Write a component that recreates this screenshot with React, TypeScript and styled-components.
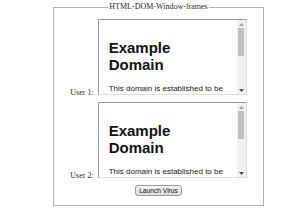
import styled, { createGlobalStyle } from 'styled-components';

const GlobalStyle = createGlobalStyle`
  html, body {
    margin: 0;
    background: #ffffff;
  }
  * {
    box-sizing: border-box;
  }
`;

const users = ['User 1:', 'User 2:'];

const App = () => {
  return (
    <>
      <GlobalStyle />
      <Page>
        <FrameSet>
          <Legend>HTML-DOM-Window-frames</Legend>
          {users.map((user, i) => (
            <Row key={user} first={i === 0}>
              <Label>{user}</Label> <FakeFrame />
            </Row>
          ))}
          <ButtonRow>
            <LaunchButton type='button'>Launch Virus</LaunchButton>
          </ButtonRow>
        </FrameSet>
      </Page>
    </>
  );
};

export default App;

// a stand-in for the example.com iframe, scaled to half size
const FakeFrame = () => (
  <Frame>
    <FrameInner>
      <FrameBody>
        <Heading>
          Example
          <br />
          Domain
        </Heading>
        <Para>This domain is established to be used for illustrative examples in documents.</Para>
      </FrameBody>
      <ScrollTrack>
        <Arrow>
          <svg width='5' height='3' viewBox='0 0 5 3'>
            <path d='M0 3 L2.5 0 L5 3 Z' fill='#a3a3a3' />
          </svg>
        </Arrow>
        <Thumb />
        <Spacer />
        <Arrow>
          <svg width='5' height='3' viewBox='0 0 5 3'>
            <path d='M0 0 L5 0 L2.5 3 Z' fill='#505050' />
          </svg>
        </Arrow>
      </ScrollTrack>
    </FrameInner>
  </Frame>
);

const Page = styled.div`
  padding: 2px 0 0 53px;
`;

const FrameSet = styled.fieldset`
  width: 211px;
  margin: 0;
  padding: 7px 6px 9px;
  border: 1px solid #b4b4b4;
  text-align: center;
  font-family: 'Liberation Serif', serif;
  font-size: 8px;
  color: #2a2a2a;
`;

const Legend = styled.legend`
  margin: 0 auto;
  padding: 0 1px;
  font-size: 8px;
  line-height: 10px;
`;

const Row = styled.div<{ first: boolean }>`
  margin-top: ${({ first }) => (first ? '0' : '5px')};
  line-height: 9px;
  white-space: nowrap;
`;

const Label = styled.span`
  font-size: 8px;
`;

// inline-block with overflow hidden: baseline sits on the bottom edge, like an iframe
const Frame = styled.span`
  display: inline-block;
  width: 149px;
  height: 76px;
  margin-left: 2px;
  overflow: hidden;
  vertical-align: baseline;
  border-top: 1px solid #9a9a9a;
  border-left: 1px solid #9a9a9a;
  border-right: 1px solid #dedede;
  border-bottom: 1px solid #dedede;
  background: #ffffff;
  text-align: left;
`;

const FrameInner = styled.span`
  display: flex;
  height: 100%;
`;

const FrameBody = styled.span`
  display: block;
  flex: 1;
  overflow: hidden;
  padding: 19px 8px 0 10px;
  font-family: 'Liberation Sans', Arial, sans-serif;
  color: #1a1a1a;
  white-space: normal;
`;

const Heading = styled.span`
  display: block;
  font-size: 15px;
  line-height: 17px;
  font-weight: bold;
  color: #111;
`;

const Para = styled.span`
  display: block;
  margin-top: 11px;
  font-size: 8px;
  line-height: 10px;
  width: 116px;
`;

const ScrollTrack = styled.span`
  display: flex;
  flex-direction: column;
  align-items: center;
  width: 9px;
  flex: none;
  background: #f1f1f1;
`;

const Arrow = styled.span`
  display: flex;
  align-items: center;
  justify-content: center;
  width: 9px;
  height: 8px;
`;

const Thumb = styled.span`
  display: block;
  width: 6px;
  height: 28px;
  background: #c1c1c1;
`;

const Spacer = styled.span`
  flex: 1;
`;

const ButtonRow = styled.div`
  margin-top: 5px;
  line-height: 11px;
`;

const LaunchButton = styled.button`
  display: inline-block;
  height: 11px;
  margin: 0;
  padding: 0 3px;
  border: 1px solid #9c9c9c;
  border-radius: 3px;
  background: linear-gradient(#f6f6f6, #dcdcdc);
  font-family: 'Liberation Sans', Arial, sans-serif;
  font-size: 6.67px;
  line-height: 9px;
  white-space: nowrap;
  color: #111;
  vertical-align: top;
`;
